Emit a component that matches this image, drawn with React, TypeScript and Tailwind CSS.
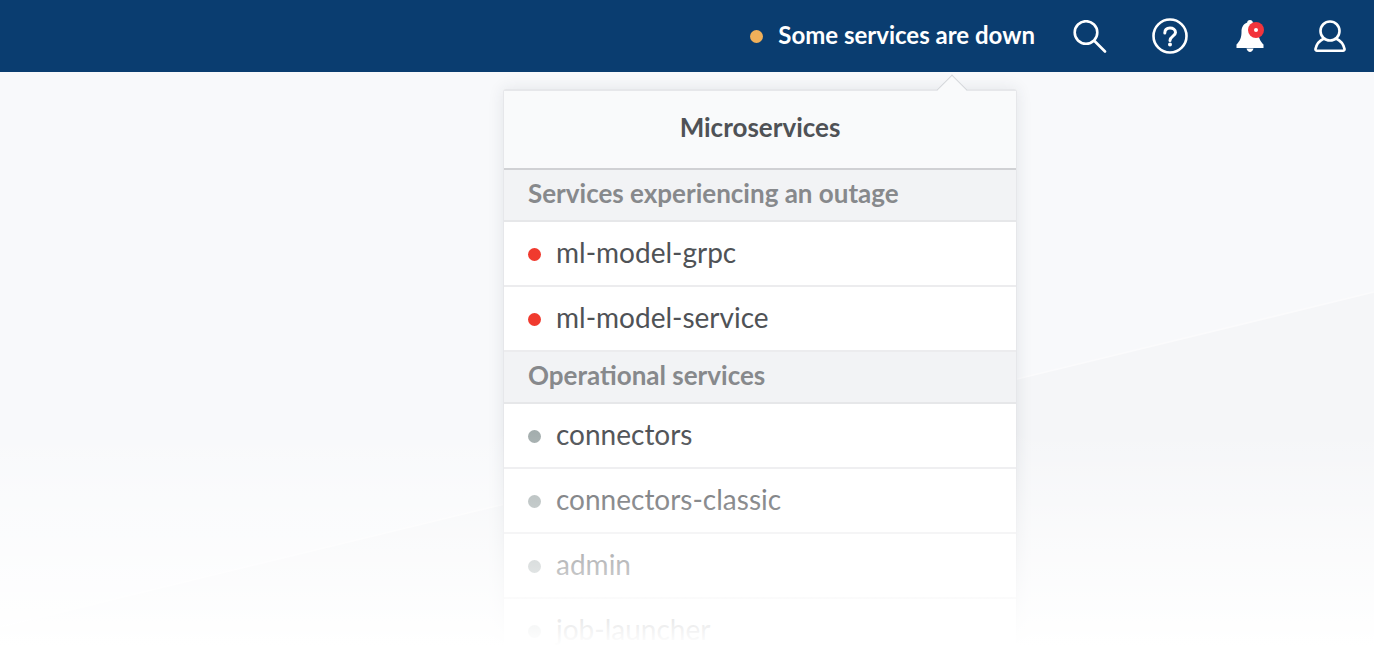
import React from 'react';

const outage = ['ml-model-grpc', 'ml-model-service'];
const operational = ['connectors', 'connectors-classic', 'admin', 'job-launcher'];

function SectionTitle({ children }: { children: React.ReactNode }) {
  return (
    <div className="h-[52px] flex items-center pl-[24px] pb-[4px] bg-[#f2f3f5] border-b-2 border-[#e6e7e9] text-[26px] font-bold text-[#87898c]">
      {children}
    </div>
  );
}

function ServiceRow({ name, dot }: { name: string; dot: string }) {
  return (
    <div className="h-[65px] flex items-center pl-[24px] pt-[2px] bg-white border-b-2 border-[#ececee] text-[28px] text-[#4f5256]">
      <span className={`w-[13px] h-[13px] rounded-full mr-[15px] ${dot}`} />
      <span className="mb-[6px]">{name}</span>
    </div>
  );
}

export default function App() {
  return (
    <div className="relative h-[670px] w-[1374px] overflow-hidden bg-[#f8f9fb] font-['Lato',sans-serif]">
      {/* background streak */}
      <svg className="absolute inset-0" width="1374" height="670" viewBox="0 0 1374 670">
        <polygon points="0,627 1374,292 1374,670 0,670" fill="#f5f6f8" />
        <line x1="0" y1="627" x2="1374" y2="292" stroke="#fbfbfc" strokeWidth="1.5" />
      </svg>

      <header className="relative h-[72px] bg-[#0a3d70] flex items-center justify-end pr-[28px] text-white">
        <span className="w-[13px] h-[13px] rounded-full bg-[#f0b05a] mr-[15px]" />
        <span className="text-[24px] font-bold mr-[38px] mb-[2px]">Some services are down</span>
        <svg className="mr-[45px]" width="34" height="33" viewBox="0 0 34 33" fill="none" stroke="currentColor" strokeWidth="2.6" strokeLinecap="round">
          <circle cx="13" cy="12.500" r="11.300" />
          <path d="M21.500 21L32 31.500" />
        </svg>
        <svg className="mr-[48px]" width="36" height="36" viewBox="0 0 36 36" fill="none" stroke="currentColor" strokeWidth="2.6" strokeLinecap="round">
          <circle cx="18" cy="18" r="16.500" />
          <path d="M12.800 15c0-3.500 2.300-5 5.200-5s5.500 1.600 5.500 4.500c0 3.600-5.500 3.800-5.500 8" strokeWidth="3" />
          <circle cx="18" cy="26.500" r="2" fill="currentColor" stroke="none" />
        </svg>
        <div className="relative w-[28px] h-[32px] mr-[50px]">
          <svg width="28" height="32" viewBox="0 0 28 32" fill="currentColor">
            <path d="M14 0c-1.700 0-2.800 1.100-2.800 2.500C7 4 5.500 7.500 5.500 12c0 5.500-1.500 9-5 12.500V28h27v-3.500c-3.500-3.500-5-7-5-12.500 0-4.500-1.500-8-5.700-9.500C16.800 1.100 15.700 0 14 0z" />
            <path d="M10.500 28.500c.6 2 2 3.500 3.500 3.500s2.900-1.500 3.500-3.500z" />
          </svg>
          <span className="absolute top-[2px] left-[12px] w-[16px] h-[16px] rounded-full bg-[#f2343c] flex items-center justify-center">
            <span className="w-[4px] h-[4px] rounded-full bg-white" />
          </span>
        </div>
        <svg width="32" height="32" viewBox="0 0 32 32" fill="none" stroke="currentColor" strokeWidth="2.6" strokeLinejoin="round">
          <circle cx="16" cy="11" r="9.500" />
          <path d="M10 18.500C5.500 20.500 2.500 24.500 1.500 28.900c-.2 1 .5 1.800 1.500 1.800h26c1 0 1.700-.8 1.500-1.800C29.500 24.500 26.500 20.500 22 18.500" />
        </svg>
      </header>

      {/* services popover */}
      <div className="absolute left-[503px] top-[89px] w-[514px] border-x border-t-2 border-[#e6e7ea] rounded-t-[3px] shadow-[0_0_16px_rgba(40,50,70,0.1)]">
        <div className="absolute -top-[12px] left-[437px] w-[22px] h-[22px] rotate-45 bg-[#f9fafb] border-l border-t border-[#d4d6da]" />
        <div className="relative h-[79px] flex items-center justify-center pb-[4px] bg-[#f9fafb] border-b-2 border-[#d0d1d4] text-[26px] font-bold text-[#4f5256]">
          Microservices
        </div>
        <SectionTitle>Services experiencing an outage</SectionTitle>
        {outage.map(name => (
          <ServiceRow key={name} name={name} dot="bg-[#f03a2e]" />
        ))}
        <SectionTitle>Operational services</SectionTitle>
        {operational.map(name => (
          <ServiceRow key={name} name={name} dot="bg-[#a3adad]" />
        ))}
      </div>

      {/* fade to white at the bottom of the page */}
      <div className="absolute left-0 right-0 top-[430px] bottom-0 bg-gradient-to-b from-white/0 to-white to-[90%]" />
    </div>
  );
}
